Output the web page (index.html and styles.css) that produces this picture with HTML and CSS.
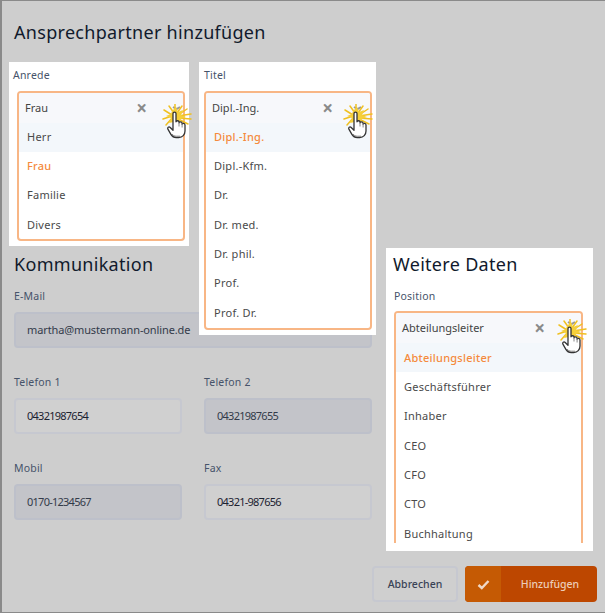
FILE: index.html
```html
<!DOCTYPE html>
<html lang="de">
<head>
<meta charset="utf-8">
<title>Ansprechpartner hinzufügen</title>
<link rel="stylesheet" href="styles.css">
</head>
<body>
<svg class="defs" width="0" height="0" aria-hidden="true">
  <symbol id="click" viewBox="0 0 34 36">
    <path d="M13 3 16.500 5 20 3" fill="none" stroke="#9a9a9a" stroke-width="2"/>
    <g stroke="#f0c020" stroke-width="1.500" stroke-linecap="round" fill="none">
      <path d="M12 11 4 6M12 12 3 15M13 13 6 21M14 9 9 2M15 8V0M17 9 22 2M18 11 27 5M18 12 31 10M18 14 31 15M18 15 28 20"/>
    </g>
    <path d="M12 7 16 3 18 8 23 6 21 11 26 13 21 15 19 20 14 18 9 19 11 14 6 12 11 10Z" fill="#f5cf3a"/>
    <path d="M13 9.500c0-1.800 3-1.800 3 0v8.300c.4-1.500 3-1.400 3.100.3v.8c.4-1.400 2.900-1.300 3 .4v.9c.5-1.200 2.900-1 2.900.7v6.100c0 3.600-2.500 6.500-6.300 6.500h-2.400c-2.600 0-4.100-1-5.400-3.200l-3-5.200c-.9-1.600 1-2.900 2.300-1.600l2.800 2.700Z" fill="#fff" stroke="#333" stroke-width="1.300" stroke-linejoin="round"/>
    <path d="M19 18.500v4M22.100 19.500v4M12 30c1 1.500 2.500 2.200 4.500 2.200h3.500" stroke="#888" stroke-width="1" fill="none"/>
  </symbol>
</svg>

<main class="dialog">
  <h1 class="title">Ansprechpartner hinzufügen</h1>

  <div class="body">
    <section class="comm">
      <h2 class="heading">Kommunikation</h2>
      <div class="fields">
        <div class="field wide">
          <label class="label">E-Mail</label>
          <div class="input off">martha@mustermann-online.de</div>
        </div>
        <div class="field">
          <label class="label">Telefon 1</label>
          <div class="input num">04321987654</div>
        </div>
        <div class="field">
          <label class="label">Telefon 2</label>
          <div class="input off num">04321987655</div>
        </div>
        <div class="field">
          <label class="label">Mobil</label>
          <div class="input off num">0170-1234567</div>
        </div>
        <div class="field">
          <label class="label">Fax</label>
          <div class="input num">04321-987656</div>
        </div>
      </div>
    </section>
  </div>

  <footer class="actions">
    <button class="btn-cancel" type="button">Abbrechen</button>
    <button class="btn-add" type="button">
      <span class="btn-icon"><svg width="13" height="11" viewBox="0 0 13 11"><path d="M1.500 6 4.800 9 11.500 2" fill="none" stroke="#f0d9c8" stroke-width="2.400"/></svg></span>
      <span class="btn-text">Hinzufügen</span>
    </button>
  </footer>

  <div class="panel panel-anrede">
    <div class="label panel-label">Anrede</div>
    <div class="select">
      <div class="control">
        <span class="value">Frau</span>
        <span class="clear">×</span>
        <svg class="cursor"><use href="#click"/></svg>
      </div>
      <div class="option hover">Herr</div>
      <div class="option active">Frau</div>
      <div class="option">Familie</div>
      <div class="option">Divers</div>
    </div>
  </div>

  <div class="panel panel-titel">
    <div class="label panel-label">Titel</div>
    <div class="select">
      <div class="control">
        <span class="value">Dipl.-Ing.</span>
        <span class="clear">×</span>
        <svg class="cursor"><use href="#click"/></svg>
      </div>
      <div class="option hover active">Dipl.-Ing.</div>
      <div class="option">Dipl.-Kfm.</div>
      <div class="option">Dr.</div>
      <div class="option">Dr. med.</div>
      <div class="option">Dr. phil.</div>
      <div class="option">Prof.</div>
      <div class="option">Prof. Dr.</div>
    </div>
  </div>

  <div class="panel panel-weitere">
    <h2 class="heading">Weitere Daten</h2>
    <div class="label panel-label">Position</div>
    <div class="select open-end">
      <div class="control">
        <span class="value">Abteilungsleiter</span>
        <span class="clear">×</span>
        <svg class="cursor"><use href="#click"/></svg>
      </div>
      <div class="option hover active">Abteilungsleiter</div>
      <div class="option">Geschäftsführer</div>
      <div class="option">Inhaber</div>
      <div class="option">CEO</div>
      <div class="option">CFO</div>
      <div class="option">CTO</div>
      <div class="option">Buchhaltung</div>
    </div>
  </div>
</main>
</body>
</html>
```
FILE: styles.css
```css
* { box-sizing: border-box; }
html, body { margin: 0; padding: 0; }
body { width: 605px; height: 613px; overflow: hidden; font-family: "Noto Sans", "Open Sans", sans-serif; }
.defs { position: absolute; }

.dialog {
  position: relative;
  width: 605px;
  height: 613px;
  background: #cecece;
  border: 1px solid #8a8a8a;
  border-left-width: 2px;
  border-right-width: 0;
  padding: 18px 8px 10px 12px;
  display: flex;
  flex-direction: column;
}
.title {
  margin: 0;
  height: 26px;
  font-size: 18px;
  line-height: 26px;
  font-weight: 400;
  letter-spacing: .3px;
  color: #111a2c;
}
.body { flex: 1; padding-top: 206px; }
.comm { width: 358px; }
.heading {
  margin: 0;
  font-size: 18px;
  line-height: 26px;
  height: 26px;
  font-weight: 400;
  letter-spacing: .3px;
  color: #111a2c;
}
.fields {
  margin-top: 12px;
  display: grid;
  grid-template-columns: 168px 168px;
  column-gap: 22px;
  row-gap: 27px;
}
.wide { grid-column: 1 / -1; }
.label {
  display: block;
  height: 16px;
  font-size: 10.500px;
  line-height: 14px;
  letter-spacing: .2px;
  color: #46536a;
}
.input {
  margin-top: 7px;
  height: 36px;
  padding-left: 11px;
  background: #d0d0d0;
  border: 2px solid #c6c8d0;
  border-radius: 4px;
  font-size: 11px;
  letter-spacing: -.12px;
  line-height: 31px;
  color: #1c2230;
}
.input.off { background: #c3c4c9; border-color: #bdc0ca; color: #333b4a; }
.input.num { letter-spacing: -.75px; }

.actions { display: flex; justify-content: flex-end; gap: 7px; height: 36px; }
.btn-cancel {
  width: 86px;
  border: 2px solid #c6c8d0;
  border-radius: 4px;
  background: #cfcfcf;
  padding: 0;
  font: 500 10.500px "Noto Sans", sans-serif;
  color: #3a4356;
}
.btn-add {
  width: 132px;
  display: flex;
  border: 0;
  padding: 0;
  border-radius: 4px;
  overflow: hidden;
  background: #bd4700;
  font: 500 10.500px "Noto Sans", sans-serif;
  color: #eccdb8;
}
.btn-icon { width: 36px; background: #c55a04; display: flex; align-items: center; justify-content: center; }
.btn-text { flex: 1; line-height: 36px; text-align: center; padding-left: 2px; }

.panel { position: absolute; background: #fff; display: flex; flex-direction: column; }
.panel-anrede { left: 7px; top: 61px; width: 180px; height: 184px; padding: 6px 4px 0 6px; }
.panel-titel { left: 197px; top: 61px; width: 177px; height: 273px; padding: 6px 4px 0 5px; }
.panel-weitere { left: 384px; top: 247px; width: 207px; height: 303px; padding: 3px 10px 0 8px; overflow: hidden; }
.panel-weitere .heading { margin-left: -1px; }
.panel-label { height: 16px; margin-bottom: 7px; padding-left: 0; }
.panel-weitere .panel-label { margin-top: 12px; margin-bottom: 6px; }
.panel-anrede .panel-label { margin-left: -2px; }
.panel-anrede .select { height: 150px; margin-left: 2px; }
.panel-titel .select { height: 239px; }

.select { border: 2px solid #f8b685; border-radius: 4px; }
.select.open-end {
  height: 232px;
  border-bottom: 0;
  border-radius: 4px 4px 0 0;
}
.control {
  position: relative;
  height: 29.500px;
  display: flex;
  align-items: center;
  padding: 0 6px;
  border-radius: 2px 2px 0 0;
  background: #f7f8fb;
  font-size: 11px;
  color: #444;
}
.value { flex: 1; }
.clear {
  position: absolute;
  right: 36px;
  top: 2px;
  font: 700 19px/26px "Noto Sans", sans-serif;
  color: #8a8a8a;
}
.panel-titel .clear { right: 37px; }
.cursor { position: absolute; left: 141px; top: 11px; width: 34px; height: 36px; z-index: 1; }
.panel-titel .cursor { left: 135px; }
.panel-weitere .cursor { left: 159px; top: 6px; }
.option {
  height: 29.400px;
  line-height: 28px;
  padding-left: 8px;
  font-size: 11px;
  letter-spacing: .25px;
  color: #4a4a4a;
}
.panel-weitere .option { line-height: 29px; }
.option.hover { background: #f3f7fb; }
.option.active { color: #f58a3c; font-weight: 500; }
```
